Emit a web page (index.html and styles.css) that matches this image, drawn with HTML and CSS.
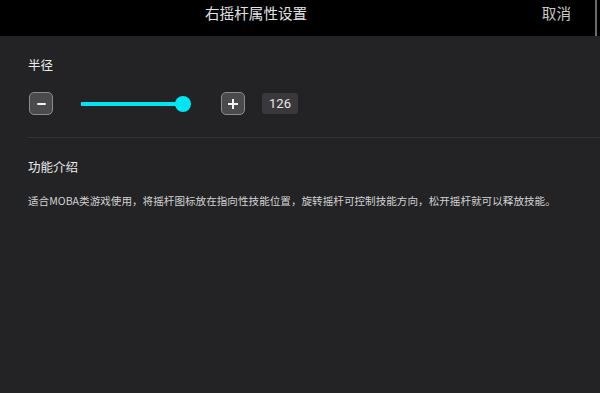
FILE: index.html
```html
<!DOCTYPE html>
<html lang="zh-CN">
<head>
<meta charset="utf-8">
<title>右摇杆属性设置</title>
<link rel="stylesheet" href="styles.css">
</head>
<body>
<header class="topbar">
  <div class="title">右摇杆属性设置</div>
  <div class="cancel">取消</div>
  <div class="edge"></div>
</header>
<main class="content">
  <div class="label">半径</div>
  <div class="row">
    <div class="btn"><span class="minus"></span></div>
    <div class="slider">
      <div class="track"></div>
      <div class="thumb"></div>
    </div>
    <div class="btn btn-plus"><span class="plus-h"></span><span class="plus-v"></span></div>
    <div class="value">126</div>
  </div>
  <div class="divider"></div>
  <div class="section-title">功能介绍</div>
  <p class="desc">适合MOBA类游戏使用，将摇杆图标放在指向性技能位置，旋转摇杆可控制技能方向，松开摇杆就可以释放技能。</p>
</main>
</body>
</html>
```
FILE: styles.css
```css
html, body {
  margin: 0;
  padding: 0;
}
body {
  width: 600px;
  height: 393px;
  overflow: hidden;
  background: #232325;
  font-family: "Noto Sans CJK SC", "Noto Sans", sans-serif;
  color: #e6e6e6;
}
.topbar {
  height: 36px;
  background: #000;
  display: flex;
  align-items: center;
}
.title {
  margin-left: 205px;
  font-size: 14.6px;
  line-height: 20px;
  color: #e2e2e2;
  margin-top: -10px;
}
.cancel {
  margin-left: auto;
  margin-right: 24px;
  font-size: 14.6px;
  line-height: 20px;
  color: #c8c8c8;
  margin-top: -10px;
}
.edge {
  width: 2px;
  height: 36px;
  background: #6a6a6a;
  margin-right: 3px;
}
.content {
  padding-left: 28px;
}
.label {
  margin-top: 20px;
  font-size: 12.5px;
  line-height: 18px;
  color: #ececec;
}
.row {
  margin-top: 18px;
  display: flex;
  align-items: center;
  height: 23px;
}
.btn {
  box-sizing: border-box;
  width: 24px;
  height: 23px;
  margin-left: 1px;
  border: 1.5px solid #8c8c8c;
  border-radius: 5px;
  background: #4a4a4c;
  display: flex;
  align-items: center;
  justify-content: center;
  position: relative;
}
.minus {
  width: 9px;
  height: 2px;
  background: #f2f2f2;
  border-radius: 1px;
}
.btn-plus {
  margin-left: 30px;
}
.plus-h {
  position: absolute;
  width: 10px;
  height: 2px;
  background: #f2f2f2;
}
.plus-v {
  position: absolute;
  width: 2px;
  height: 10px;
  background: #f2f2f2;
}
.slider {
  margin-left: 28px;
  width: 110px;
  display: flex;
  align-items: center;
}
.track {
  width: 102px;
  height: 4px;
  background: #00e6f0;
}
.thumb {
  width: 16px;
  height: 16px;
  border-radius: 50%;
  background: #00e6f0;
  margin-left: -8px;
}
.value {
  margin-left: 17px;
  width: 36px;
  height: 21px;
  border-radius: 3px;
  background: #39393b;
  color: #e6e6e6;
  font-family: "Roboto", "Noto Sans", sans-serif;
  font-size: 13px;
  line-height: 21px;
  text-align: center;
}
.divider {
  margin-top: 22px;
  height: 1px;
  background: #333335;
}
.section-title {
  margin-top: 20px;
  font-size: 12.5px;
  line-height: 18px;
  color: #ececec;
}
.desc {
  margin: 17px 0 0;
  font-size: 10.6px;
  line-height: 15px;
  color: #d2d2d2;
}
```
